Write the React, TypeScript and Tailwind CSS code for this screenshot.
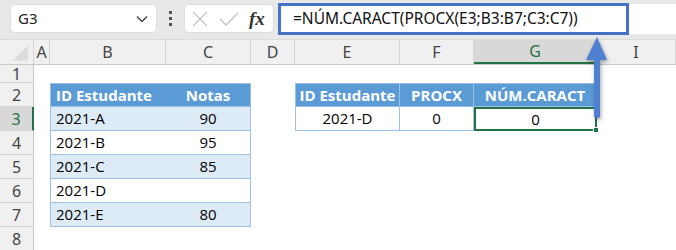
import React from "react";

const cols = [
  { k: "", w: 34 },
  { k: "A", w: 16 },
  { k: "B", w: 116 },
  { k: "C", w: 85 },
  { k: "D", w: 44 },
  { k: "E", w: 105 },
  { k: "F", w: 74 },
  { k: "G", w: 123 },
  { k: "I", w: 79 },
];

const rowH = [18, 24, 24, 24, 24, 24, 24, 24];

type Cell = { t?: string; cls?: string };

function cellFor(r: number, c: string): Cell {
  const hdr = "bg-[#5b9bd5] text-white font-bold border-t border-b border-[#9bc2e6]";
  const t1 = ["", "", ["2021-A", "90"], ["2021-B", "95"], ["2021-C", "85"], ["2021-D", ""], ["2021-E", "80"]];
  if (r === 2 && c === "B") return { t: "ID Estudante", cls: hdr + " border-l justify-start pl-[5px]" };
  if (r === 2 && c === "C") return { t: "Notas", cls: hdr + " border-r justify-center" };
  if (r >= 3 && r <= 7 && (c === "B" || c === "C")) {
    const fill = r % 2 === 1 ? "bg-[#ddebf7]" : "bg-white";
    const [a, b] = t1[r - 1] as string[];
    if (c === "B") return { t: a, cls: `${fill} border-l border-b border-[#9bc2e6] justify-start pl-[5px] text-black` };
    return { t: b, cls: `${fill} border-r border-b border-[#9bc2e6] justify-center text-black` };
  }
  if (r === 2 && c === "E") return { t: "ID Estudante", cls: hdr + " border-l border-r justify-center" };
  if (r === 2 && c === "F") return { t: "PROCX", cls: hdr + " border-r justify-center" };
  if (r === 2 && c === "G") return { t: "NÚM.CARACT", cls: hdr + " border-r justify-center" };
  if (r === 3 && c === "E") return { t: "2021-D", cls: "border-l border-r border-b border-[#9bc2e6] justify-center text-black" };
  if (r === 3 && c === "F") return { t: "0", cls: "border-r border-b border-[#9bc2e6] justify-center text-black" };
  if (r === 3 && c === "G") return { t: "0", cls: "relative border-2 border-[#217346] justify-center text-black" };
  return { cls: "" };
}

export default function App() {
  return (
    <div className="relative w-[676px] h-[250px] overflow-hidden bg-white font-['Open_Sans','Noto_Sans',sans-serif]">
      {/* toolbar */}
      <div className="h-[40px] bg-[#e8e8e8] flex items-start pt-[4px] pl-[10px] border-b border-[#dcdcdc]">
        <div className="w-[147px] h-[29px] bg-white rounded-[5px] border border-[#dddddd] flex items-center justify-between pl-[7px] pr-[8px]">
          <span className="text-[15px] text-[#222] font-['Noto_Sans',sans-serif]">G3</span>
          <svg width="12" height="8" viewBox="0 0 12 8">
            <path d="M1 1.5 L6 6.5 L11 1.5" stroke="#444" strokeWidth="1.4" fill="none" />
          </svg>
        </div>
        <div className="w-[27px] h-[29px] flex flex-col items-center justify-center gap-[3px]">
          <div className="w-[3px] h-[3px] bg-[#555]" />
          <div className="w-[3px] h-[3px] bg-[#555]" />
          <div className="w-[3px] h-[3px] bg-[#555]" />
        </div>
        <div className="w-[90px] h-[29px] bg-white rounded-[5px] border border-[#dddddd] flex items-center pl-[6px] gap-[9px]">
          <svg width="18" height="18" viewBox="0 0 18 18">
            <path d="M2 2 L16 16 M16 2 L2 16" stroke="#c2c2c2" strokeWidth="1.3" />
          </svg>
          <svg width="22" height="18" viewBox="0 0 22 18">
            <path d="M2 9 L8 15 L20 3" stroke="#c2c2c2" strokeWidth="1.3" fill="none" />
          </svg>
          <span className="text-[19px] italic font-bold text-[#333] leading-none font-['Liberation_Serif',serif]">
            fx
          </span>
        </div>
        <div className="ml-[4px] flex-1 h-[30px] bg-white flex items-center">
          <div className="w-[351px] h-[32px] -mt-[1px] border-[3px] border-[#4472c4] flex items-center pl-[12px]">
            <span className="text-[15.5px] text-[#111] font-['Noto_Sans',sans-serif]">
              =NÚM.CARACT(PROCX(E3;B3:B7;C3:C7))
            </span>
          </div>
        </div>
      </div>

      {/* column headers */}
      <div className="flex h-[25px] bg-[#f0f0f0] border-b border-[#c8c8c8] font-['Noto_Sans',sans-serif]">
        {cols.map((c, i) => (
          <div
            key={i}
            style={{ width: c.w }}
            className={
              "shrink-0 flex items-center justify-center text-[16px] text-[#444] border-r border-[#d4d4d4] " +
              (c.k === "G" ? "bg-[#d8d8d8] border-b-2 border-b-[#217346] text-[#217346]" : "")
            }
          >
            {i === 0 ? (
              <svg width="34" height="25" viewBox="0 0 34 25">
                <path d="M29 5 L29 21 L13 21 Z" fill="#dcdcdc" />
              </svg>
            ) : (
              <span>{c.k}</span>
            )}
          </div>
        ))}
      </div>

      {/* rows */}
      {rowH.map((h, ri) => {
        const r = ri + 1;
        return (
          <div key={r} className="flex" style={{ height: h }}>
            {cols.map((c, ci) => {
              if (ci === 0) {
                return (
                  <div
                    key={ci}
                    style={{ width: c.w }}
                    className={
                      "shrink-0 flex items-center justify-center text-[16px] border-b border-[#d4d4d4] font-['Noto_Sans',sans-serif] " +
                      (r === 3
                        ? "bg-[#d8d8d8] text-[#217346] border-r-2 border-r-[#217346]"
                        : "bg-[#f0f0f0] text-[#444] border-r border-r-[#c8c8c8]")
                    }
                  >
                    <span>{r}</span>
                  </div>
                );
              }
              const cell = cellFor(r, c.k);
              return (
                <div
                  key={ci}
                  style={{ width: c.w }}
                  className={"shrink-0 flex items-center text-[15px] leading-none " + cell.cls}
                >
                  {cell.t}
                  {r === 3 && c.k === "G" && (
                    <div className="absolute -right-[4px] -bottom-[4px] w-[6px] h-[6px] bg-[#217346] border border-white" />
                  )}
                </div>
              );
            })}
          </div>
        );
      })}

      {/* arrow annotation */}
      <svg
        className="absolute left-[580px] top-[34px] drop-shadow-[1px_2px_2px_rgba(0,0,0,0.35)]"
        width="36"
        height="90"
        viewBox="0 0 36 90"
      >
        <path d="M17 3 L27 26 L20 26 L20 82 Q20 84 18 84 L16 84 Q14 84 14 82 L14 26 L6 26 Z" fill="#4f7fd0" />
      </svg>
    </div>
  );
}
